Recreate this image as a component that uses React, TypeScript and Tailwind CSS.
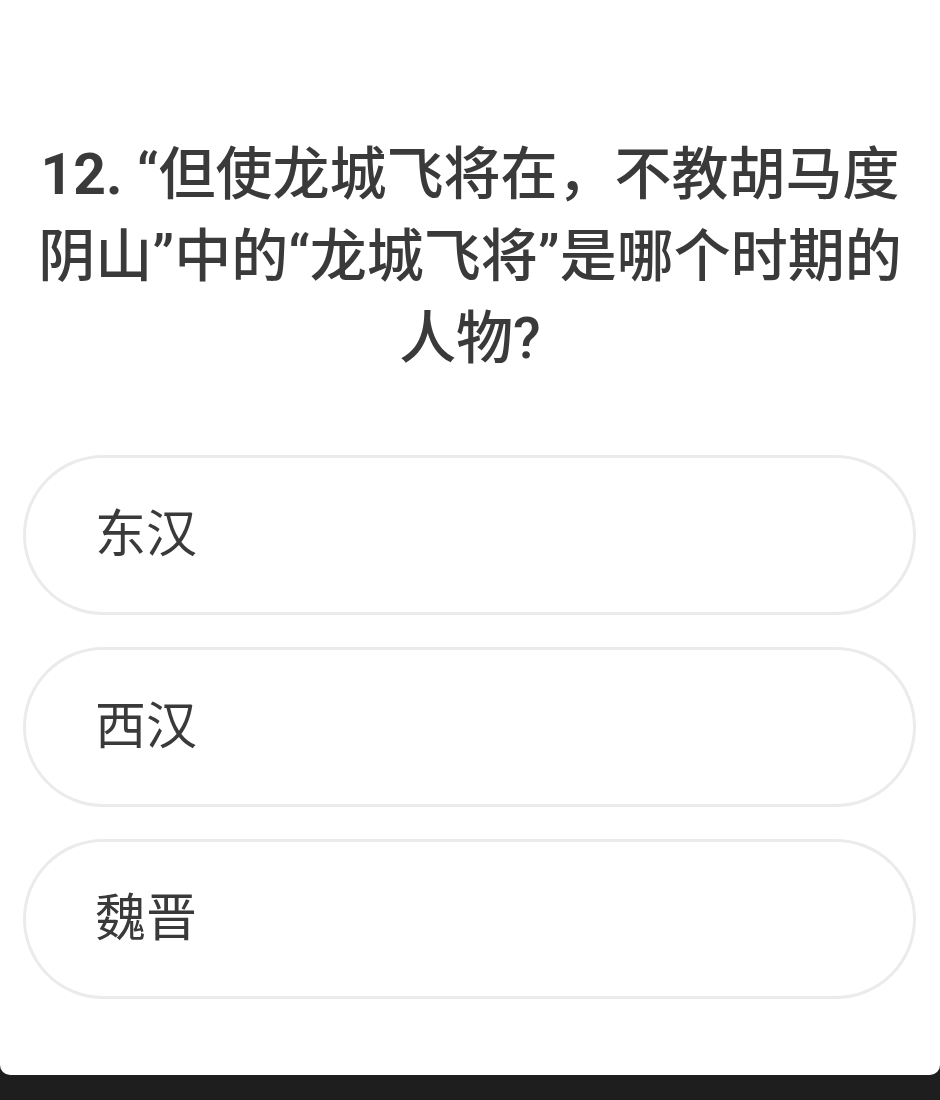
import React from 'react';

const options = ['东汉', '西汉', '魏晋'];

const App = () => {
  return (
    <div
      className="w-[940px] h-[1100px] bg-[#1e1e1e]"
      style={{ fontFamily: 'Roboto, "Noto Sans CJK SC", sans-serif' }}
    >
      <div className="h-[1075px] bg-white rounded-b-[10px] flex flex-col">
        {/* Question */}
        <h1 className="mt-[134px] px-[6px] text-center text-[57px] leading-[82px] font-medium text-[#3a3a3a]">
          <span className="font-bold">12.</span> “但使龙城飞将在，不教胡马度
          <br />
          阴山”中的“龙城飞将”是哪个时期的
          <br />
          人物?
        </h1>

        {/* Options */}
        <div className="mt-[75px] ml-[23px] mr-[24px] flex flex-col gap-[32px]">
          {options.map((opt) => (
            <div
              key={opt}
              className="h-[160px] rounded-full border-[3px] border-[#ebebeb] flex items-center pl-[69px] text-[51px] text-[#3a3a3a]"
            >
              {opt}
            </div>
          ))}
        </div>
      </div>
    </div>
  );
};

export default App;
